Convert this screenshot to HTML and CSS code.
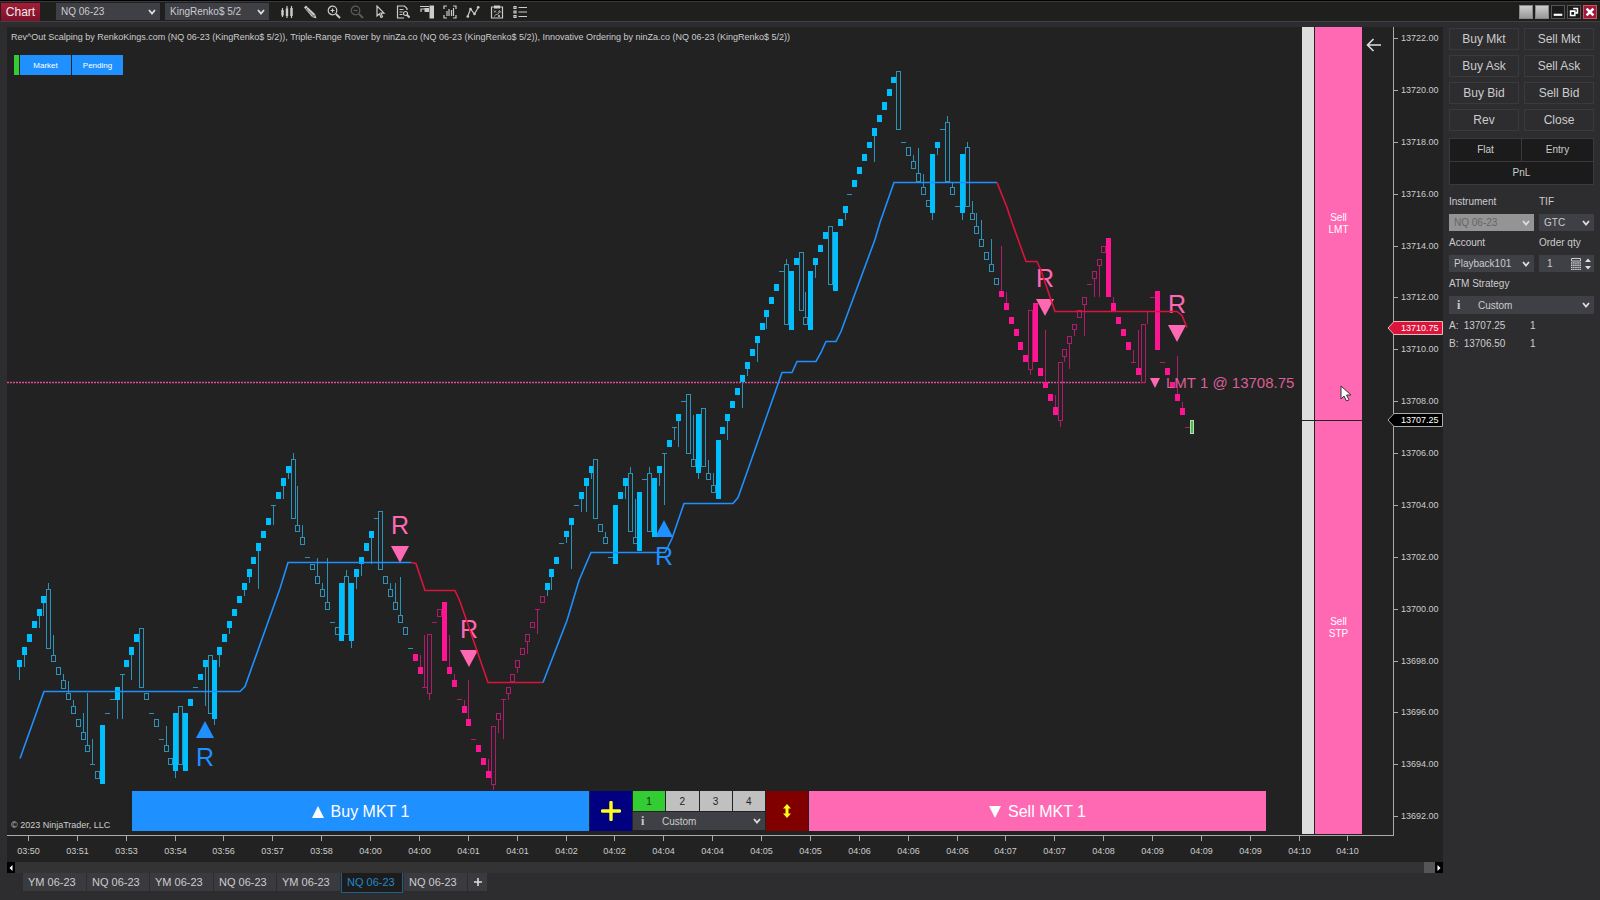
FILE: index.html
```html
<!DOCTYPE html>
<html lang="en">
<head>
  <meta charset="UTF-8">
  <meta name="viewport" content="width=device-width, initial-scale=1.0">
  <title>Chart</title>
  <link rel="stylesheet" href="styles.css">
</head>
<body>

<header class="titlebar">
  <div class="badge">Chart</div>
  <select class="picker" aria-label="Instrument"><option>NQ 06-23</option></select>
  <select class="picker" aria-label="Bar type"><option>KingRenko$ 5/2</option></select>
  <div class="tools">
    <button aria-label="Chart style"><svg viewBox="0 0 14 14"><path d="M2.500 3v9M7 1v12M11.500 1v12" class="thin"/><path d="M1.300 5h2.400v5.500H1.300zM5.800 3.500h2.400V11H5.800zM10.300 3h2.400v8h-2.400z" class="solid"/></svg></button>
    <button aria-label="Draw"><svg viewBox="0 0 14 14"><path d="M1 2.500L3 .5l9 8.500 1.500 4.500L9 12z" class="solid"/><path d="M2.500 4.500l2-2M3 3.500l8 8M9.500 12l2.500-2.500" stroke="#444" stroke-width=".8" fill="none"/></svg></button>
    <button aria-label="Zoom in"><svg viewBox="0 0 14 14"><circle cx="5.500" cy="5.500" r="4.300" class="thin"/><path d="M3.500 5.500h4M5.500 3.500v4" class="thin"/><path d="M9 9l4 4" class="thick"/></svg></button>
    <button aria-label="Zoom out" disabled><svg viewBox="0 0 14 14"><circle cx="5.500" cy="5.500" r="4.300" class="thin"/><path d="M3.500 5.500h4" class="thin"/><path d="M9 9l4 4" class="thick"/></svg></button>
    <button aria-label="Pointer"><svg viewBox="0 0 14 14"><path d="M4 1v10l2.500-2.200L8 12.500l1.500-.7L8 8.200h3z" class="thin"/></svg></button>
    <button aria-label="Data box"><svg viewBox="0 0 14 14"><path d="M11 5V3.500L8.500 1H1.500v12H8M3.500 4.500h4M3.500 7h3M3.500 9.500h3" class="thin"/><circle cx="9.500" cy="8.500" r="2" class="thin"/><path d="M11 10l2.500 2.500" class="thick"/></svg></button>
    <button aria-label="Chart trader"><svg viewBox="0 0 14 14"><path d="M9.500.5H14v13H9.500z" class="solid"/><path d="M0 1.500h9M1 7V4h4M1 7.500" class="thin"/><path d="M4.500 3H9v4H4.500z" class="solid"/></svg></button>
    <button aria-label="Data series"><svg viewBox="0 0 14 14"><path d="M4 1H1v3M10 1h3v3M1 10v3h3M13 10v3h-3M4 6v5M6 4v7M8.500 5v6M10.500 3v8" class="thin"/></svg></button>
    <button aria-label="Indicators"><svg viewBox="0 0 14 14"><path d="M1.500 12L4.500 4l4 5 4-7" class="thin"/><circle cx="1.800" cy="11.500" r="1.300" class="solid"/><circle cx="4.500" cy="4" r="1.300" class="solid"/><circle cx="8.500" cy="9" r="1.300" class="solid"/><circle cx="12.200" cy="2.300" r="1.300" class="solid"/></svg></button>
    <button aria-label="Strategies"><svg viewBox="0 0 14 14"><path d="M1.500 2h11v11h-11zM4.500 1h5v2h-5z" class="thin"/><path d="M4 5.500l2 2M6 5.500l-2 2M8 10l2 2M10 10l-2 2M4.500 11.500c0-3 5-1 5-5M8 7.500l1.500-2 1.500 2" stroke="#ccc" stroke-width=".8" fill="none"/></svg></button>
    <button aria-label="Properties"><svg viewBox="0 0 14 14"><path d="M1 1.500h2v2H1zM1 6h2v2H1zM1 10.500h2v2H1z" class="thin"/><path d="M5.500 2.500H14M5.500 7H14M5.500 11.500H14" class="thin"/></svg></button>
  </div>
  <div class="window-buttons">
    <button class="blank" aria-label="Link instrument"></button>
    <button class="blank" aria-label="Link interval"></button>
    <button aria-label="Minimize"><svg viewBox="0 0 14 14"><path d="M2 9h10v2.500H2z" fill="#fff"/></svg></button>
    <button aria-label="Restore"><svg viewBox="0 0 14 14"><path d="M6 3h5v5H9M3 6h5v5H3z" fill="none" stroke="#fff" stroke-width="1.800"/></svg></button>
    <button class="close" aria-label="Close window"><svg viewBox="0 0 14 14"><path d="M3 3l8 8M11 3l-8 8" stroke="#fff" stroke-width="3"/></svg></button>
  </div>
</header>

<main class="workspace">
  <section class="chart-panel">
    <div class="chart-area">
      <svg id="chart" class="chart" viewBox="7 27 1436 835" role="img" aria-label="NQ 06-23 price chart"></svg>

      <div class="chart-header">
        <p>Rev^Out Scalping by RenkoKings.com (NQ 06-23 (KingRenko$ 5/2)), Triple-Range Rover by ninZa.co (NQ 06-23 (KingRenko$ 5/2)), Innovative Ordering by ninZa.co (NQ 06-23 (KingRenko$ 5/2))</p>
        <div class="modes">
          <span class="mode-state"></span>
          <button>Market</button>
          <button>Pending</button>
        </div>
      </div>

      <div class="sell-column">
        <div class="sell-strip"></div>
        <div class="sell-zones">
          <button class="zone-lmt">Sell<br>LMT</button>
          <button class="zone-stp">Sell<br>STP</button>
        </div>
        <svg class="pointer" viewBox="0 0 12 17"><path d="M1 1v13l3-3 2.500 5 2.500-1.200L6.500 10H11z" fill="#fff" stroke="#333"/></svg>
      </div>

      <button class="back" aria-label="Back"><svg viewBox="0 0 16 14"><path d="M15 7H1.500M7.500 1l-6 6 6 6" fill="none" stroke="#ddd" stroke-width="1.600"/></svg></button>

      <div class="order-bar">
        <button class="buy"><span class="up"></span>Buy MKT 1</button>
        <button class="plus" aria-label="Add"><svg viewBox="0 0 20 20"><path d="M10 1.500v17M1.500 10h17" stroke="#ffff1a" stroke-width="3.400" stroke-linecap="round"/></svg></button>
        <div class="qty">
          <div class="qty-row">
            <button class="active">1</button>
            <button>2</button>
            <button>3</button>
            <button>4</button>
          </div>
          <div class="with-info">
            <i>i</i>
            <select class="picker" aria-label="Order strategy"><option>Custom</option></select>
          </div>
        </div>
        <button class="swap" aria-label="Reverse"><svg viewBox="0 0 8 14"><path d="M4 0l4 4.500H5.500v5H8L4 14 0 9.500h2.500v-5H0z" fill="#ffff1a"/></svg></button>
        <button class="sell"><span class="down"></span>Sell MKT 1</button>
      </div>
    </div>

    <div class="scrollbar">
      <button aria-label="Scroll left"><svg viewBox="0 0 8 10"><path d="M5.500 2v6L2.500 5z" fill="#fff"/></svg></button>
      <span class="thumb"></span>
      <button aria-label="Scroll right"><svg viewBox="0 0 8 10"><path d="M2.500 2v6l3-3z" fill="#fff"/></svg></button>
    </div>
  </section>

  <aside class="trader">
    <div class="trade-buttons">
      <button>Buy Mkt</button>
      <button>Sell Mkt</button>
      <button>Buy Ask</button>
      <button>Sell Ask</button>
      <button>Buy Bid</button>
      <button>Sell Bid</button>
      <button>Rev</button>
      <button>Close</button>
    </div>
    <div class="position">
      <div>Flat</div>
      <div>Entry</div>
      <div class="pnl">PnL</div>
    </div>
    <div class="fields">
      <div class="field">
        <label for="instrument">Instrument</label>
        <select id="instrument" class="picker" disabled><option>NQ 06-23</option></select>
      </div>
      <div class="field">
        <label for="tif">TIF</label>
        <select id="tif" class="picker"><option>GTC</option></select>
      </div>
      <div class="field">
        <label for="account">Account</label>
        <select id="account" class="picker"><option>Playback101</option></select>
      </div>
      <div class="field">
        <label for="order-qty">Order qty</label>
        <div class="stepper">
          <input id="order-qty" type="text" value="1">
          <svg class="calc" viewBox="0 0 10 12"><path d="M.5.5h9v2.500h-9z" fill="none" stroke="#ccc"/><path d="M0 5h10M0 7.300h10M0 9.500h10M0 11.600h10" stroke="#ccc" stroke-width="1.400" stroke-dasharray="1.500 .6"/></svg>
          <svg class="arrows" viewBox="0 0 6 12"><path d="M0 4l3-3.500L6 4zM0 8l3 3.500L6 8z" fill="#ddd"/></svg>
        </div>
      </div>
      <div class="field wide">
        <label for="atm">ATM Strategy</label>
        <div class="with-info">
          <i>i</i>
          <select id="atm" class="picker"><option>Custom</option></select>
        </div>
      </div>
    </div>
    <table class="quotes">
      <tr><th>A:</th><td>13707.25</td><td>1</td></tr>
      <tr><th>B:</th><td>13706.50</td><td>1</td></tr>
    </table>
  </aside>
</main>

<nav class="tabs">
  <a href="#">YM 06-23</a>
  <a href="#">NQ 06-23</a>
  <a href="#">YM 06-23</a>
  <a href="#">NQ 06-23</a>
  <a href="#">YM 06-23</a>
  <a href="#" class="active">NQ 06-23</a>
  <a href="#">NQ 06-23</a>
  <button aria-label="New tab"><svg viewBox="0 0 10 10"><path d="M5 1v8M1 5h8" stroke="#ddd" stroke-width="1.600"/></svg></button>
</nav>

<script src="chart.js"></script>
</body>
</html>
```

FILE: styles.css
```css
* {
  box-sizing: border-box;
}

body {
  margin: 0;
  min-height: 100vh;
  display: flex;
  flex-direction: column;
  background: #2d2d30;
  color: #ccc;
  font-family: "Liberation Sans", Arial, sans-serif;
  font-size: 10px;
  border-top: 1px solid #000;
}

button {
  font-family: inherit;
  color: inherit;
  padding: 0;
  border: none;
  background: none;
  cursor: pointer;
}

/* Title bar */
.titlebar {
  display: flex;
  align-items: center;
  height: 21px;
  padding: 0 3px 0 1px;
  background: #1f1f1e;
  border-top: 1px solid #3a3a3e;
  border-bottom: 1px solid #3f3f46;
}

.badge {
  height: 18px;
  width: 39px;
  margin-right: 16px;
  line-height: 18px;
  text-align: center;
  font-size: 12px;
  color: #eee;
  background: linear-gradient(#a51c38, #7d1029);
}

.picker {
  appearance: none;
  height: 17px;
  padding: 0 16px 0 5px;
  border: none;
  border-radius: 0;
  font-family: inherit;
  font-size: 10px;
  color: #ccc;
  background: #3f3f46 url("data:image/svg+xml,%3Csvg xmlns='http://www.w3.org/2000/svg' width='8' height='6'%3E%3Cpath d='M1 1l3 3.500 3-3.500' fill='none' stroke='%23ddd' stroke-width='1.800'/%3E%3C/svg%3E") no-repeat right 4px center;
}

.titlebar .picker {
  width: 104px;
  margin-right: 5px;
}

.tools {
  display: flex;
  justify-content: space-between;
  width: 247px;
  margin-left: 6px;
}

.tools button,
.tools svg {
  display: block;
  width: 14px;
  height: 14px;
}

.tools button:disabled {
  opacity: 0.35;
}

.thin {
  fill: none;
  stroke: #ccc;
  stroke-width: 1.2;
}

.thick {
  fill: none;
  stroke: #ccc;
  stroke-width: 2;
}

.solid {
  fill: #ccc;
}

.window-buttons {
  display: flex;
  gap: 2px;
  margin-left: auto;
}

.window-buttons button {
  width: 14px;
  height: 14px;
  border: 1px solid #555;
  background: #1a1a1a;
}

.window-buttons svg {
  display: block;
}

.window-buttons .blank {
  background: linear-gradient(#ccc, #999);
  border-color: #888;
}

.window-buttons .close {
  background: #a3173a;
  border-color: #c55;
}

/* Chart */
.workspace {
  display: flex;
  align-items: flex-start;
  padding: 5px 6px 0 7px;
}

.chart-panel {
  flex: 1;
  min-width: 0;
}

.chart-area {
  position: relative;
  background: #222;
}

.chart {
  display: block;
  width: 100%;
}

.chart text {
  font-size: 9px;
  fill: #ccc;
}

.chart .signal {
  font-size: 25px;
  text-anchor: middle;
}

.chart .order {
  font-size: 15px;
  fill: #d95f96;
}

.chart .time {
  text-anchor: middle;
}

.chart-header {
  position: absolute;
  top: 4px;
  left: 4px;
}

.chart-header p {
  margin: 0;
  font-size: 9px;
  line-height: 12px;
}

.modes {
  display: flex;
  gap: 1px;
  margin: 12px 0 0 3px;
}

.modes button {
  width: 51px;
  height: 20px;
  font-size: 8px;
  color: #fff;
  background: #1e90ff;
}

.mode-state {
  width: 5px;
  background: #32cd32;
}

.sell-column {
  position: absolute;
  top: 0;
  right: 81px;
  bottom: 28px;
  display: flex;
  gap: 1px;
  width: 60px;
}

.sell-strip {
  width: 12px;
  background: linear-gradient(#222, #222) 0 393px / 100% 1px no-repeat #ddd;
}

.sell-zones {
  flex: 1;
  display: flex;
  flex-direction: column;
  background: #ff69b4;
}

.sell-zones button {
  font-size: 10px;
  line-height: 12px;
  color: #fff;
}

.zone-lmt {
  height: 394px;
  border-bottom: 1px solid #222;
}

.zone-stp {
  flex: 1;
}

.pointer {
  position: absolute;
  top: 358px;
  left: 38px;
  width: 12px;
  height: 17px;
}

.back {
  position: absolute;
  top: 11px;
  right: 61px;
  width: 16px;
  height: 14px;
}

.back svg {
  display: block;
}

.order-bar {
  position: absolute;
  left: 125px;
  right: 177px;
  bottom: 31px;
  display: flex;
  gap: 1px;
  height: 40px;
}

.order-bar .buy,
.order-bar .sell {
  flex: 1;
  display: flex;
  align-items: center;
  justify-content: center;
  gap: 7px;
  padding-top: 1px;
  font-size: 16px;
  color: #fff;
  background: #1e90ff;
}

.order-bar .sell {
  background: #ff69b4;
}

.up,
.down {
  border: 6px solid transparent;
  border-top-width: 0;
  border-bottom: 12px solid #fff;
}

.down {
  border-bottom-width: 0;
  border-top: 12px solid #fff;
}

.plus,
.swap {
  display: flex;
  align-items: center;
  justify-content: center;
  width: 42px;
}

.plus {
  background: #000080;
}

.plus svg {
  width: 20px;
  height: 20px;
}

.swap {
  background: #800000;
}

.swap svg {
  width: 8px;
  height: 14px;
}

.qty {
  width: 132px;
}

.qty-row {
  display: flex;
  gap: 1px;
  height: 20px;
  margin-bottom: 1px;
}

.qty-row button {
  flex: 1;
  font-size: 10px;
  color: #222;
  background: #c0c0c0;
}

.qty-row .active {
  background: #32cd32;
}

.with-info {
  display: flex;
  background: #3f3f46;
}

.with-info i {
  width: 24px;
  padding-left: 8px;
  font: bold 12px/18px "Liberation Serif", serif;
}

.with-info .picker {
  flex: 1;
  min-width: 0;
}

.with-info,
.with-info .picker {
  height: 18px;
}

.scrollbar {
  display: flex;
  height: 11px;
  background: #333;
}

.scrollbar button {
  width: 8px;
  background: #000;
}

.scrollbar svg {
  display: block;
}

.thumb {
  width: 11px;
  margin-left: auto;
  background: #555;
}

/* Chart trader */
.trader {
  width: 145px;
  margin-left: 6px;
  padding-top: 1px;
}

.trade-buttons {
  display: grid;
  grid-template-columns: 1fr 1fr;
  gap: 5px;
}

.trade-buttons button {
  height: 22px;
  font-size: 12px;
  border: 1px solid #3a3a3e;
}

.position {
  display: grid;
  grid-template-columns: 1fr 1fr;
  gap: 1px;
  margin-top: 7px;
  border: 1px solid #3a3a3e;
  background: #3a3a3e;
}

.position div {
  line-height: 22px;
  text-align: center;
  background: #1b1b1c;
}

.position .pnl {
  grid-column: span 2;
}

.fields {
  display: grid;
  grid-template-columns: 85px 55px;
  gap: 6px 5px;
  margin-top: 11px;
}

.field {
  min-width: 0;
}

.field label {
  display: block;
  line-height: 12px;
  margin-bottom: 6px;
}

.field .picker {
  display: block;
  width: 100%;
}

.field .picker:disabled {
  color: #666;
  background-color: #949494;
  opacity: 1;
}

.wide {
  grid-column: span 2;
}

.stepper {
  display: flex;
  align-items: center;
  gap: 4px;
  height: 17px;
  padding-right: 3px;
  background: #3f3f46;
}

.stepper input {
  flex: 1;
  min-width: 0;
  padding: 0 0 0 8px;
  border: none;
  font-family: inherit;
  font-size: 10px;
  color: #ccc;
  background: none;
}

.calc {
  width: 10px;
  height: 12px;
}

.arrows {
  width: 6px;
  height: 12px;
}

.quotes {
  margin-top: 2px;
  border-collapse: collapse;
}

.quotes th,
.quotes td {
  height: 18px;
  padding: 0;
  text-align: left;
  font-weight: normal;
}

.quotes th {
  width: 15px;
}

.quotes td {
  width: 68px;
}

/* Tabs */
.tabs {
  display: flex;
  gap: 1px;
  padding-left: 23px;
  margin-bottom: 8px;
  height: 18px;
}

.tabs a {
  width: 62px;
  padding-left: 5px;
  font-size: 11px;
  line-height: 18px;
  color: #ccc;
  text-decoration: none;
  background: #3a3a3f;
}

.tabs a:nth-child(odd) {
  width: 63px;
}

.tabs .active {
  height: 20px;
  color: #2288cc;
  background: #1c1c1c;
  border: 1px solid #1c6288;
  border-top: none;
}

.tabs button {
  width: 19px;
  background: #3a3a3f;
}

.tabs button svg {
  display: block;
  width: 10px;
  height: 10px;
  margin: 0 auto;
}
```

FILE: chart.js
```js
const svg = document.getElementById('chart');
const BLUE = '#1e90ff';
const PINK = '#ff69b4';
const RED = '#dc143c';

// kind + body top, body bottom, high, low (0 = no wick), one entry per bar
// U/D filled, u/d hollow; U and u blue, D and d pink
const bars = `
U660,667,0,680 U647,655,0,667 U634,642 U621,628 U609,616,0,628 U596,603,0,616 u589,648,583 u655,661,635 u667,674 u680,688,674
u693,699,681 u706,713,700 u719,726 u732,739,713 u745,751,693 u764,764,739 u771,778 U725,784 u713,713 u699,699
U687,700,0,719 u674,674,0,719 U660,667 U647,655,0,680 U634,642 u628,687 u693,699 u713,713 u719,726 u739,739
u745,751,726 u758,764 U713,771,0,778 u706,764 U713,771 U699,706 u687,687 U674,680 U660,667,0,706 u655,713
U660,719,0,725 U647,655,0,667 U634,642 U621,628,0,634 U609,616 U596,603 U583,590,0,596 U569,577,0,583 U557,564 U543,551,0,589
U531,538 U518,525 u505,505,0,525 U492,499 U478,486,0,499 U466,473,0,479 u459,518,453 u525,531,486 u537,544,525 u557,557
u564,569 u576,583,558 u589,596,583 u602,609,558 u622,622 u627,634 U583,641 u576,634,570 U583,641,0,648 U569,577,0,589
U557,564,0,576 U543,551 U531,538,0,564 u518,518 u511,569 u576,583 u589,596,583 u602,609,583 u615,622,577 u627,634
u648,648 D654,661 D667,674,655 d687,687,635 d634,693,0,700 d622,622 d609,616 D602,661 D667,674,635 D680,687,674
d699,699 D706,713,700 D719,726,680 d739,739 D745,752 D758,765 D771,778,759 d726,784,0,790 d713,719,0,733 d699,699,0,739
d687,693,0,700 d674,681 d660,667,0,673 d648,654 d634,641,0,654 d622,627 d609,609,0,634 d596,602 U583,590,0,596 U569,577,0,590
U557,564 u543,543 U531,537,0,543 U518,525,0,569 u505,505 U492,499,0,512 U478,486,0,512 U466,473,0,479 u459,518 u524,531
u537,543,532 u557,557 U505,564 U492,499 U478,486,0,499 u473,531,467 u537,543,499 U492,551 u479,479 u473,531,467
U478,537 U466,473,0,486 u453,453,0,505 U440,447 u427,427,0,440 U414,421,0,447 u401,401 u394,453 u459,466,415 U414,473,0,479
u408,466 u473,479,460 u485,492,473 U440,499 U427,434 U414,421,0,440 U401,408 U388,395 U375,382,0,408 U362,369,0,376
U349,356 U336,343,0,362 U323,330 U310,317,0,329 U297,304 U284,291 u271,271 u264,324,259 U271,330 U258,265
u252,310 u317,324,292 U271,330 U258,265,0,278 U245,252 U232,239 u226,284 U232,291 U219,226 U206,213,0,220
u194,194 U180,187 U167,174 U154,161 U142,148 U128,136,0,162 U115,122 U102,110 U89,96 U77,83
u71,129 u142,142 u147,155 u161,168,155 u173,181,148 u187,194,174 u200,206 U154,213,0,220 U142,148,0,155 u129,129
u122,181,116 u187,194,182 u206,206 U154,213,0,220 u147,206,142 u213,219,201 u226,233,213 u239,246,220 u252,259 u264,271,239
u278,284 D291,297,246 D303,310,292 D317,324 D329,336 D342,350 D355,362 d310,369,0,375 D303,362 D368,376
D382,388,330 D394,401 D407,415,395 d362,420,0,427 d349,356,0,362 d336,343,0,369 d324,329,0,336 d310,317 d297,304,0,336 d284,284
d271,278,0,297 d259,265,0,297 d246,252 D238,297 D303,311,297 D317,324 D329,336 D342,350 d362,362,350 D368,375,330
d324,382 d311,311,0,324 d297,297 D291,350 d362,362 D368,375 D382,388 D394,401,356 D408,415,402 d427,427
`.trim().split(/\s+/);

const times = ['03:50', '03:51', '03:53', '03:54', '03:56', '03:57', '03:58', '04:00', '04:00', '04:01',
  '04:01', '04:02', '04:02', '04:04', '04:04', '04:05', '04:05', '04:06', '04:06', '04:06',
  '04:07', '04:07', '04:08', '04:09', '04:09', '04:09', '04:10', '04:10'];

const trend = [
  [BLUE, '20,758 44,691 240,691 245,686 280,588 288,562 411,562'],
  [RED, '411,562 416,563 425,590 455,590 460,601 488,682 543,682'],
  [BLUE, '543,682 567,620 579,580 591,552 665,552 672,538 684,503 733,503 738,497 748,469 782,372 792,372 797,361 816,361 821,352 826,341 836,341 841,331 875,239 880,222 894,182 997,182'],
  [RED, '997,182 1007,207 1012,222 1026,261 1037,261 1041,270 1055,311 1177,311 1182,315 1187,327']
];

// x, baseline of the R, direction
const signals = [
  [205, 766, 'up'],
  [400, 534, 'down'],
  [469, 638, 'down'],
  [664, 565, 'up'],
  [1045, 287, 'down'],
  [1177, 313, 'down']
];

let out = '';

function line(x1, y1, x2, y2, color, extra = '') {
  out += `<line x1="${x1}" y1="${y1}" x2="${x2}" y2="${y2}" stroke="${color}" ${extra}/>`;
}

function text(x, y, label, extra = '') {
  out += `<text x="${x}" y="${y}" ${extra}>${label}</text>`;
}

// Resting limit order
line(7, 382.5, 1145, 382.5, '#d94f8f', 'stroke-width="1.6" stroke-dasharray="2 1"');

// Signals sit under the trend line
signals.forEach(([x, y, dir]) => {
  const color = dir === 'up' ? BLUE : PINK;
  text(x, y, 'R', `class="signal" style="fill:${color}"`);
  const pts = dir === 'up'
    ? `${x - 9},${y - 28} ${x + 9},${y - 28} ${x},${y - 45}`
    : `${x - 9},${y + 12} ${x + 9},${y + 12} ${x},${y + 29}`;
  out += `<polygon points="${pts}" fill="${color}"/>`;
});

bars.forEach((bar, i) => {
  const kind = bar[0];
  const [top, bottom, high, low] = bar.slice(1).split(',').map(Number);
  const x = Math.round(19 + i * 4.885);
  const up = kind.toUpperCase() === 'U';
  const full = up ? '#00bfff' : '#ff1493';
  const dim = up ? '#2b93ba' : '#b01c6c';

  if (high) line(x + 0.5, high, x + 0.5, top, dim);
  if (low) line(x + 0.5, bottom, x + 0.5, low, dim);
  if (top === bottom) {
    line(x - 2, top + 0.5, x + 3, top + 0.5, dim);
  } else if (kind === 'U' || kind === 'D') {
    out += `<rect x="${x - 2}" y="${top}" width="5" height="${bottom - top}" fill="${full}"/>`;
  } else {
    out += `<rect x="${x - 1.5}" y="${top + 0.5}" width="4" height="${bottom - top}" fill="none" stroke="${dim}"/>`;
  }
});

// Bar in progress
out += '<rect x="1190.5" y="420.5" width="3" height="13" fill="#32cd32" stroke="#ccc"/>';

trend.forEach(([color, points]) => {
  out += `<polyline points="${points}" fill="none" stroke="${color}" stroke-width="1.6" transform="translate(0 .5)"/>`;
});

out += `<polygon points="1150,378 1160,378 1155,388" fill="${PINK}"/>`;
text(1166, 388, 'LMT 1 @ 13708.75', 'class="order"');

// Axes
line(1393.5, 27, 1393.5, 836, '#aaa');
line(7, 835.5, 1394, 835.5, '#aaa');
for (let i = 0; i <= 15; i++) {
  const y = Math.round(38 + i * 51.88);
  line(1394, y + 0.5, 1398, y + 0.5, '#aaa');
  text(1401, y + 3, (13722 - i * 2).toFixed(2));
}
times.forEach((label, i) => {
  const x = Math.round(28 + i * 48.87);
  line(x + 0.5, 836, x + 0.5, 841, '#aaa');
  text(x + 0.5, 854, label, 'class="time"');
});

// Price markers
function marker(y, label, fill, stroke) {
  out += `<path d="M1388 ${y}l6 -6.500h48.500v13h-48.500z" fill="${fill}" stroke="${stroke}"/>`;
  text(1401, y + 3, label, 'style="fill:#fff"');
}
marker(328, '13710.75', RED, '#dbb');
marker(420, '13707.25', '#000', '#aaa');

text(11, 828, '© 2023 NinjaTrader, LLC');

svg.innerHTML = out;
```
